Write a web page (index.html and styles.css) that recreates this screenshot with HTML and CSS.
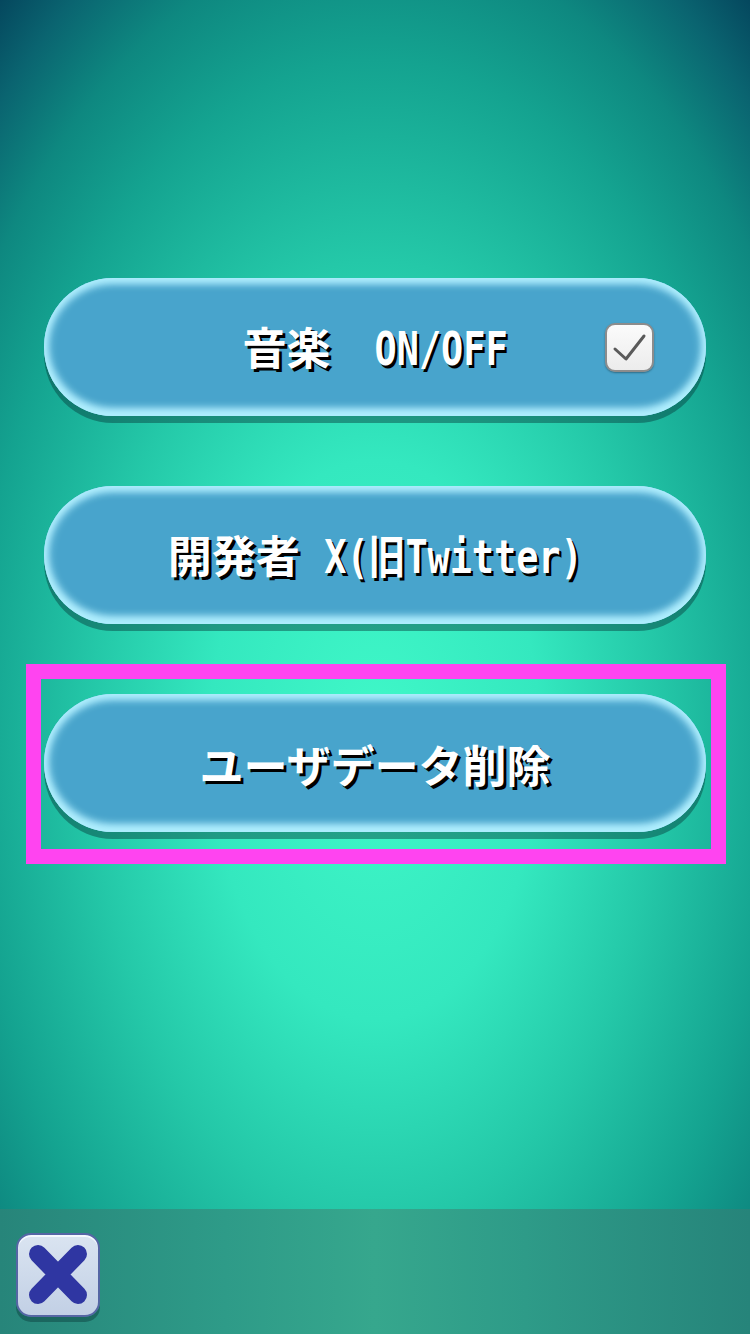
FILE: index.html
```html
<!DOCTYPE html>
<html lang="ja">
<head>
<meta charset="utf-8">
<title>設定</title>
<link rel="stylesheet" href="styles.css">
</head>
<body>
<div class="screen">
  <main class="menu">
    <button class="pill">
      <span class="label">音楽　<span class="lat lat-onoff">ON/OFF</span></span>
      <span class="check">
        <svg width="45" height="45" viewBox="0 0 45 45"><path d="M8 24 L19 34 L37 11" fill="none" stroke="#5a5a5a" stroke-width="3" stroke-linecap="round" stroke-linejoin="round"/></svg>
      </span>
    </button>
    <button class="pill">
      <span class="label">開発者<span class="lat lat-tw">X(旧Twitter)</span></span>
    </button>
    <div class="highlight">
      <button class="pill">
        <span class="label">ユーザデータ削除</span>
      </button>
    </div>
  </main>
  <footer class="bar">
    <button class="close" aria-label="閉じる">
      <svg width="84" height="84" viewBox="0 0 84 84"><path d="M22 21 L62 62 M62 21 L22 62" stroke="#2f36a2" stroke-width="18" stroke-linecap="round"/></svg>
    </button>
  </footer>
</div>
</body>
</html>
```
FILE: styles.css
```css
* { box-sizing: border-box; }
html, body { margin: 0; padding: 0; }
body {
  width: 750px;
  height: 1334px;
  overflow: hidden;
  font-family: "Noto Sans CJK JP", "Noto Sans", sans-serif;
}
.screen {
  width: 750px;
  height: 1334px;
  display: flex;
  flex-direction: column;
  background: radial-gradient(ellipse 590px 1000px at 375px 740px,
    #40f8c8 0%, #34e8bf 28%, #24c8a8 48%, #14a390 68%, #0e8880 80%, #0a6470 90%, #033e58 100%);
}
.menu {
  flex: 1;
  display: flex;
  flex-direction: column;
  gap: 70px;
  padding: 278px 44px 0 44px;
}
.pill {
  width: 100%;
  height: 138px;
  border: none;
  padding: 0;
  border-radius: 69px;
  background: #48a4cc;
  box-shadow:
    inset 0 0 10px 4px #aeeefe,
    inset 0 6px 8px -2px #b0ecfc,
    inset 0 -7px 8px 0 #b4f0ff,
    0 7px 0 rgba(6, 60, 60, 0.45);
  display: grid;
  grid-template-columns: 1fr auto 1fr;
  align-items: center;
  font-family: "Noto Sans CJK JP", sans-serif;
  color: #fff;
  cursor: pointer;
}
.label {
  grid-column: 2;
  font-size: 44px;
  font-weight: 700;
  line-height: 1;
  white-space: nowrap;
  text-shadow: 3px 3px 0 #000;
  padding-top: 2px;
}
.lat {
  display: inline-block;
  font-family: "DejaVu Sans Mono", "Noto Sans CJK JP", monospace;
  font-size: 46px;
  font-weight: 700;
  transform: scaleX(0.8);
}
.lat-onoff { margin: 0 -16.6px; }
.lat-tw { margin: 0 -32.3px 0 -8.3px; }
.check {
  grid-column: 3;
  justify-self: end;
  margin-right: 52px;
  width: 49px;
  height: 49px;
  border: 2px solid #8c8c8c;
  border-radius: 10px;
  background: linear-gradient(#fbfbfb, #ececec);
  box-shadow: 0 1px 2px rgba(0, 0, 0, 0.35);
  display: flex;
  align-items: center;
  justify-content: center;
}
.highlight {
  margin: -30px -20px 0 -18px;
  border: 15px solid #ff44f0;
  padding: 15px 5px 17px 3px;
}
.bar {
  height: 125px;
  padding: 24px 0 0 16px;
  background: linear-gradient(90deg, #27857a 0%, #2e9b88 30%, #36a78d 50%, #2e9b88 70%, #26847a 100%);
}
.close {
  width: 84px;
  height: 84px;
  padding: 0;
  border: 2px solid #5566a4;
  border-radius: 15px;
  background: linear-gradient(#dae4f1, #c2d0e5);
  box-shadow: inset 0 2px 0 #f4f8ff, 0 5px 0 rgba(10, 60, 60, 0.45);
  display: block;
  position: relative;
}
.close svg { position: absolute; left: -2px; top: -2px; }
```
